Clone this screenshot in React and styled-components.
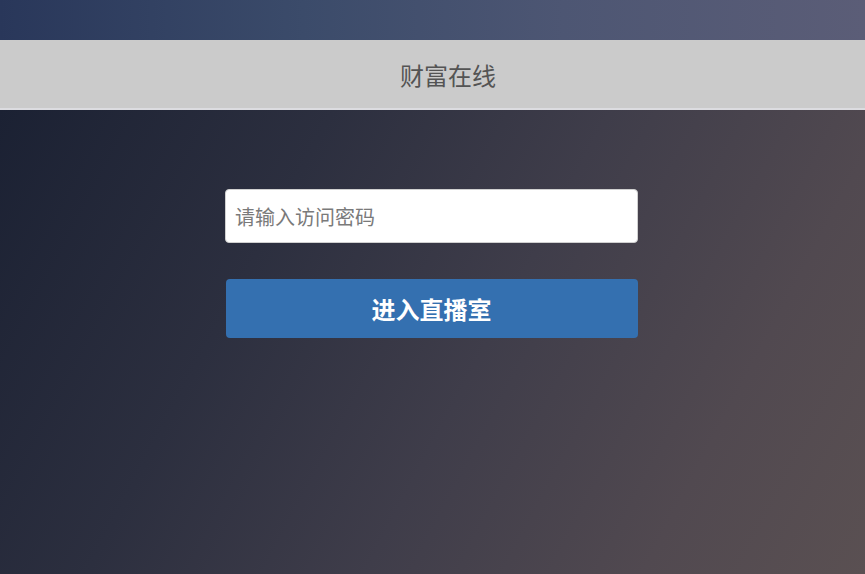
import React, { useState } from 'react'
import styled, { createGlobalStyle } from 'styled-components'

const GlobalStyle = createGlobalStyle`
    html, body {
        margin: 0;
        padding: 0;
        height: 100%;
    }
    body {
        font-family: "Noto Sans CJK SC", "Liberation Sans", sans-serif;
        background: #262a3a;
    }
    #root {
        min-height: 100%;
    }
`

const Page = styled.div`
    display: flex;
    flex-direction: column;
    width: 100%;
    height: 574px;
    overflow: hidden;
`

const TopBand = styled.div`
    height: 40px;
    flex-shrink: 0;
    background: linear-gradient(90deg, #29375a 0%, #3b4b6a 35%, #4d5673 65%, #5b5d77 100%);
`

const Header = styled.header`
    height: 68px;
    flex-shrink: 0;
    display: flex;
    align-items: center;
    justify-content: center;
    padding-left: 31px;
    background: #cbcbcb;
    border-bottom: 2px solid #dcdce0;
`

const Title = styled.h1`
    margin: 0;
    font-size: 24px;
    font-weight: 400;
    color: #545454;
`

const Main = styled.main`
    flex: 1;
    display: flex;
    flex-direction: column;
    align-items: center;
    padding-top: 79px;
    padding-right: 2px;
    gap: 36px;
    background: linear-gradient(118deg, #1b2133 0%, #2c2f3f 30%, #3f3d4a 55%, #514950 80%, #5a5052 100%);
`

const Input = styled.input`
    box-sizing: border-box;
    width: 413px;
    height: 54px;
    padding: 0 9px;
    border: 1px solid #d0d0d0;
    border-radius: 4px;
    background: #fff;
    font-family: inherit;
    font-size: 20px;
    color: #333;
    outline: none;
    &::placeholder {
        color: #7a7a7a;
    }
`

const Button = styled.button`
    width: 412px;
    height: 59px;
    border: none;
    border-radius: 4px;
    background: #3470b0;
    color: #fff;
    font-family: inherit;
    font-size: 24px;
    font-weight: 700;
    cursor: pointer;
`

export default function App() {
    const [pwd, setPwd] = useState('')
    return (
        <Page>
            <GlobalStyle />
            <TopBand />
            <Header>
                <Title>财富在线</Title>
            </Header>
            <Main>
                <Input
                    type="password"
                    placeholder="请输入访问密码"
                    value={pwd}
                    onChange={e => setPwd(e.target.value)}
                />
                <Button>进入直播室</Button>
            </Main>
        </Page>
    )
}
